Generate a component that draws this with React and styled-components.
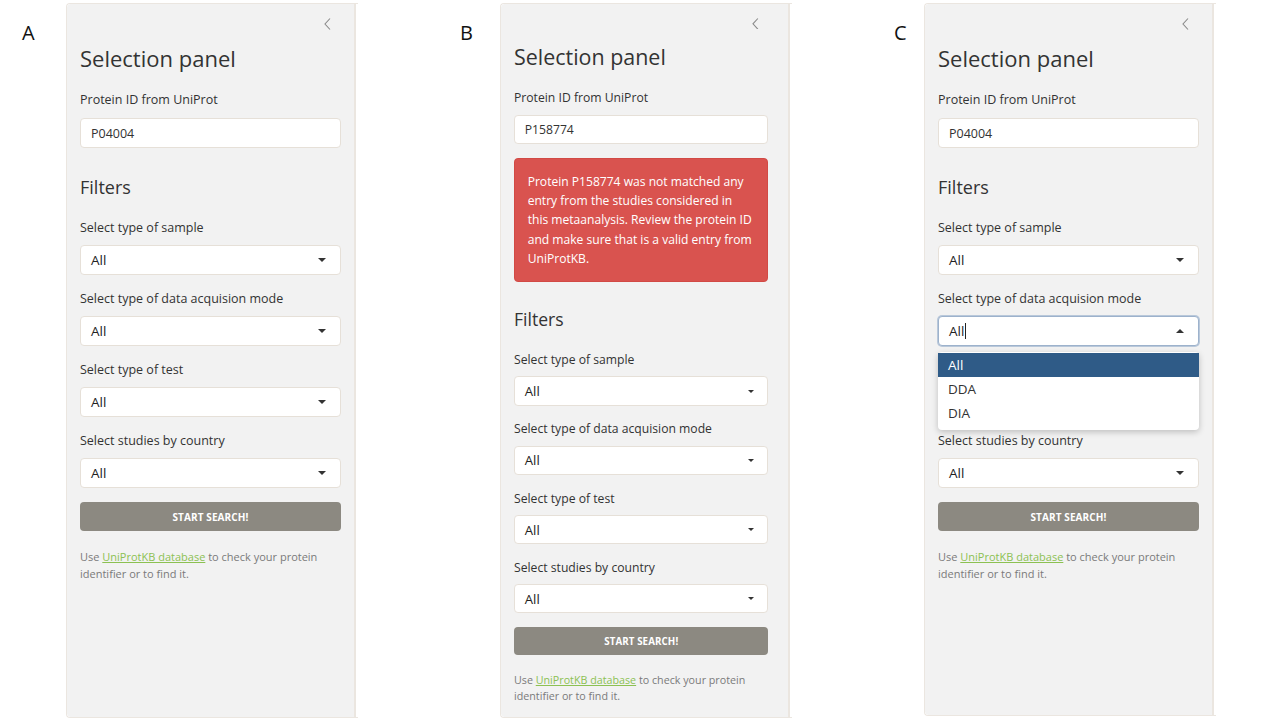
import React from 'react';
import styled, { createGlobalStyle } from 'styled-components';

const GlobalStyle = createGlobalStyle`
  html, body {
    margin: 0;
    padding: 0;
    background: #ffffff;
  }
  body {
    font-family: 'Open Sans', 'Noto Sans', sans-serif;
    color: #333333;
  }
  * {
    box-sizing: border-box;
  }
`;

const Row = styled.div`
  display: flex;
  align-items: flex-start;
  gap: 102px;
  width: 1280px;
  height: 720px;
  padding: 3px 0 0 22px;
  overflow: hidden;
`;

const Figure = styled.div`
  display: flex;
  align-items: flex-start;
`;

const Letter = styled.div`
  width: ${props => props.$w}px;
  margin-top: 18px;
  font-size: 20px;
  line-height: 24px;
  color: #111;
`;

const Frame = styled.div`
  width: 292px;
  height: ${props => props.$h}px;
  border: 1px solid #ebe6e0;
  border-right: none;
  border-radius: 4px 0 0 4px;
  background: #ffffff;
`;

const Sidebar = styled.div`
  width: 289px;
  height: 100%;
  background: #f2f2f2;
  border-right: 2px solid #ebe6e0;
  border-radius: 4px 0 0 4px;
  padding: 0 13px;
`;

const Inner = styled.div`
  width: 261px;
  zoom: ${props => props.$zoom || 1};
`;

const Header = styled.div`
  height: 40px;
  display: flex;
  justify-content: flex-end;
  padding: 14px 10px 0 0;
`;

const Title = styled.h2`
  margin: 0;
  font-size: 22px;
  line-height: 28px;
  font-weight: 400;
  color: #333;
`;

const SubTitle = styled.h3`
  margin: 27px 0 0;
  font-size: 18px;
  line-height: 24px;
  font-weight: 400;
  color: #333;
`;

const Label = styled.div`
  font-size: 12.5px;
  line-height: 18px;
  color: #333;
`;

const InputWrap = styled.div`
  display: flex;
  flex-direction: column;
  gap: 9px;
  margin-top: 19px;
`;

const TextInput = styled.div`
  height: 30px;
  background: #fff;
  border: 1px solid #e6e0d8;
  border-radius: 4px;
  padding: 0 10px;
  display: flex;
  align-items: center;
  font-size: 12.5px;
  color: #333;
`;

const Alert = styled.div`
  margin: 14px 0 2px;
  background: #d9534f;
  border: 1px solid #d24a45;
  border-radius: 4px;
  padding: 13px 13px;
  color: #fff;
  font-size: 12.4px;
  line-height: 19.8px;
  white-space: nowrap;
`;

const Fields = styled.div`
  display: flex;
  flex-direction: column;
  gap: 15px;
  margin-top: 20px;
`;

const Field = styled.div`
  position: relative;
  display: flex;
  flex-direction: column;
  gap: 8px;
`;

const SelectBox = styled.div`
  height: 30px;
  background: #fff;
  border: 1px solid ${props => (props.$focused ? '#9db2cc' : '#e6e0d8')};
  box-shadow: ${props => (props.$focused ? '0 0 0 1px #b9c8da' : 'none')};
  border-radius: 4px;
  padding: 0 14px 0 10px;
  display: flex;
  align-items: center;
  justify-content: space-between;
  font-size: 13.5px;
  color: #222;
`;

const Value = styled.span`
  display: flex;
  align-items: center;
`;

const Cursor = styled.span`
  display: inline-block;
  width: 1px;
  height: 16px;
  margin-left: 1px;
  background: #222;
`;

const Caret = styled.span`
  width: 0;
  height: 0;
  border-left: 4px solid transparent;
  border-right: 4px solid transparent;
  ${props =>
    props.$up
      ? 'border-bottom: 4px solid #333;'
      : 'border-top: 4px solid #333;'}
`;

const Menu = styled.div`
  position: absolute;
  left: 0;
  right: 0;
  top: calc(100% + 6px);
  z-index: 2;
  background: #fff;
  border-radius: 4px;
  padding: 1px 0 5px;
  box-shadow: 0 2px 6px rgba(0, 0, 0, 0.22);
`;

const Option = styled.div`
  height: 24px;
  padding: 0 10px;
  display: flex;
  align-items: center;
  font-size: 13.5px;
  color: ${props => (props.$active ? '#fff' : '#333')};
  background: ${props => (props.$active ? '#2f5b87' : 'transparent')};
`;

const Button = styled.div`
  margin-top: 14px;
  height: 29px;
  border-radius: 4px;
  background: #8c8981;
  color: #fff;
  font-size: 10px;
  font-weight: 700;
  display: flex;
  align-items: center;
  justify-content: center;
  letter-spacing: 0.1px;
`;

const Help = styled.p`
  margin: 17px 0 0;
  font-size: 11px;
  line-height: 17px;
  color: #7a7a7a;
`;

const Link = styled.a`
  color: #8cc152;
  text-decoration: underline;
`;

const Chevron = () => (
  <svg width="7" height="12" viewBox="0 0 7 12">
    <polyline points="6,0.5 1,6 6,11.5" fill="none" stroke="#8a8a8a" strokeWidth="1.1" />
  </svg>
);

const filters = [
  'Select type of sample',
  'Select type of data acquision mode',
  'Select type of test',
  'Select studies by country',
];

const Select = ({ open }) => (
  <SelectBox $focused={open}>
    <Value>
      All
      {open && <Cursor />}
    </Value>
    <Caret $up={open} />
  </SelectBox>
);

const Panel = ({ protein, error, openIndex, zoom, height }) => (
  <Frame $h={height}>
    <Sidebar>
      <Inner $zoom={zoom}>
        <Header>
          <Chevron />
        </Header>
        <Title>Selection panel</Title>
        <InputWrap>
          <Label>Protein ID from UniProt</Label>
          <TextInput>{protein}</TextInput>
        </InputWrap>
        {error && (
          <Alert>
            Protein {protein} was not matched any
            <br />
            entry from the studies considered in
            <br />
            this metaanalysis. Review the protein ID
            <br />
            and make sure that is a valid entry from
            <br />
            UniProtKB.
          </Alert>
        )}
        <SubTitle>Filters</SubTitle>
        <Fields>
          {filters.map((f, i) => (
            <Field key={f}>
              <Label>{f}</Label>
              <Select open={openIndex === i} />
              {openIndex === i && (
                <Menu>
                  <Option $active>All</Option>
                  <Option>DDA</Option>
                  <Option>DIA</Option>
                </Menu>
              )}
            </Field>
          ))}
        </Fields>
        <Button>START SEARCH!</Button>
        <Help>
          Use <Link>UniProtKB database</Link> to check your protein
          <br />
          identifier or to find it.
        </Help>
      </Inner>
    </Sidebar>
  </Frame>
);

export default function App() {
  return (
    <>
      <GlobalStyle />
      <Row>
        <Figure>
          <Letter $w={44}>A</Letter>
          <Panel protein="P04004" height={715} />
        </Figure>
        <Figure>
          <Letter $w={40}>B</Letter>
          <Panel protein="P158774" error zoom={0.975} height={715} />
        </Figure>
        <Figure>
          <Letter $w={30}>C</Letter>
          <Panel protein="P04004" openIndex={1} height={713} />
        </Figure>
      </Row>
    </>
  );
}
